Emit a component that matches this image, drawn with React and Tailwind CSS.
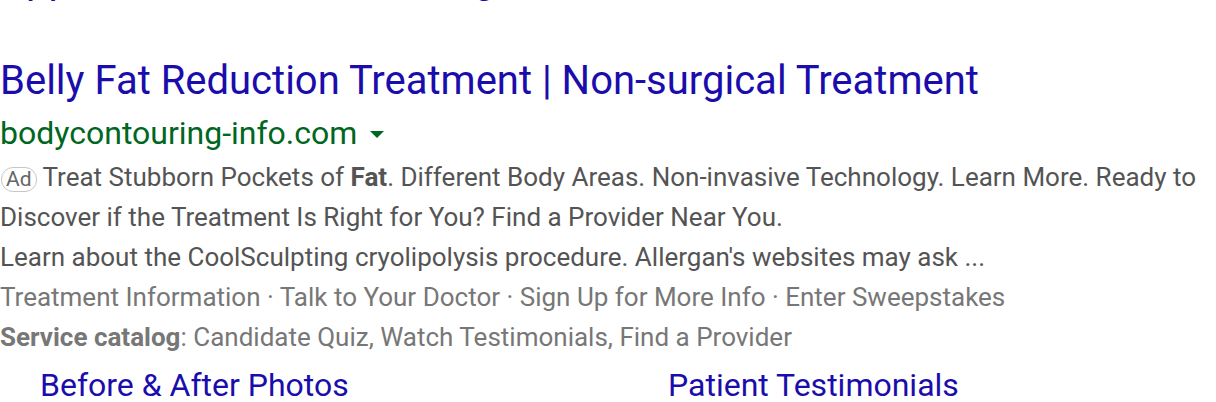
export default function App() {
  const font = { fontFamily: 'Roboto, "Liberation Sans", Arial, sans-serif' };
  return (
    <div className="w-[1216px] h-[402px] overflow-hidden bg-white" style={font}>
      <div className="mt-[-44px] text-[40px] leading-[48px] text-[#1a0dab] whitespace-nowrap">
        Applications of Fat Freezing - Non-Invasive Treatment at Home Clinics Nearby Now. Learn Why
      </div>
      <div className="mt-[53px] text-[40px] leading-[48px] text-[#1a0dab] whitespace-nowrap">
        Belly Fat Reduction Treatment | Non-surgical Treatment
      </div>
      <div className="mt-[10px] flex items-center text-[32px] leading-[36px] text-[#006621]">
        <span>bodycontouring-info.com</span>
        <svg width="14" height="7" viewBox="0 0 14 7" className="ml-[13px] mt-[2px]">
          <path d="M0 0 L14 0 L7 7 Z" fill="#006621" />
        </svg>
      </div>
      <div className="mt-[6px] text-[26px] leading-[40px] text-[#545454]">
        <div>
          <span className="inline-block align-baseline border border-[#c6c6c6] rounded-[12px] px-[4px] text-[21px] leading-[23px] text-[#666] mr-[6px] ml-[1px]">
            Ad
          </span>
          Treat Stubborn Pockets of <b className="font-bold">Fat</b>. Different Body Areas. Non-invasive Technology. Learn More. Ready to Discover if the Treatment Is Right for You? Find a Provider Near You.
        </div>
        <div>Learn about the CoolSculpting cryolipolysis procedure. Allergan's websites may ask ...</div>
        <div className="text-[#777]">
          Treatment Information · Talk to Your Doctor · Sign Up for More Info · Enter Sweepstakes
        </div>
        <div className="text-[#777]">
          <b className="font-bold">Service catalog</b>: Candidate Quiz, Watch Testimonials, Find a Provider
        </div>
      </div>
      <div className="mt-[8px] flex text-[32px] leading-[40px] text-[#1a0dab]">
        <div className="pl-[40px] w-[668px]">Before &amp; After Photos</div>
        <div>Patient Testimonials</div>
      </div>
    </div>
  );
}
